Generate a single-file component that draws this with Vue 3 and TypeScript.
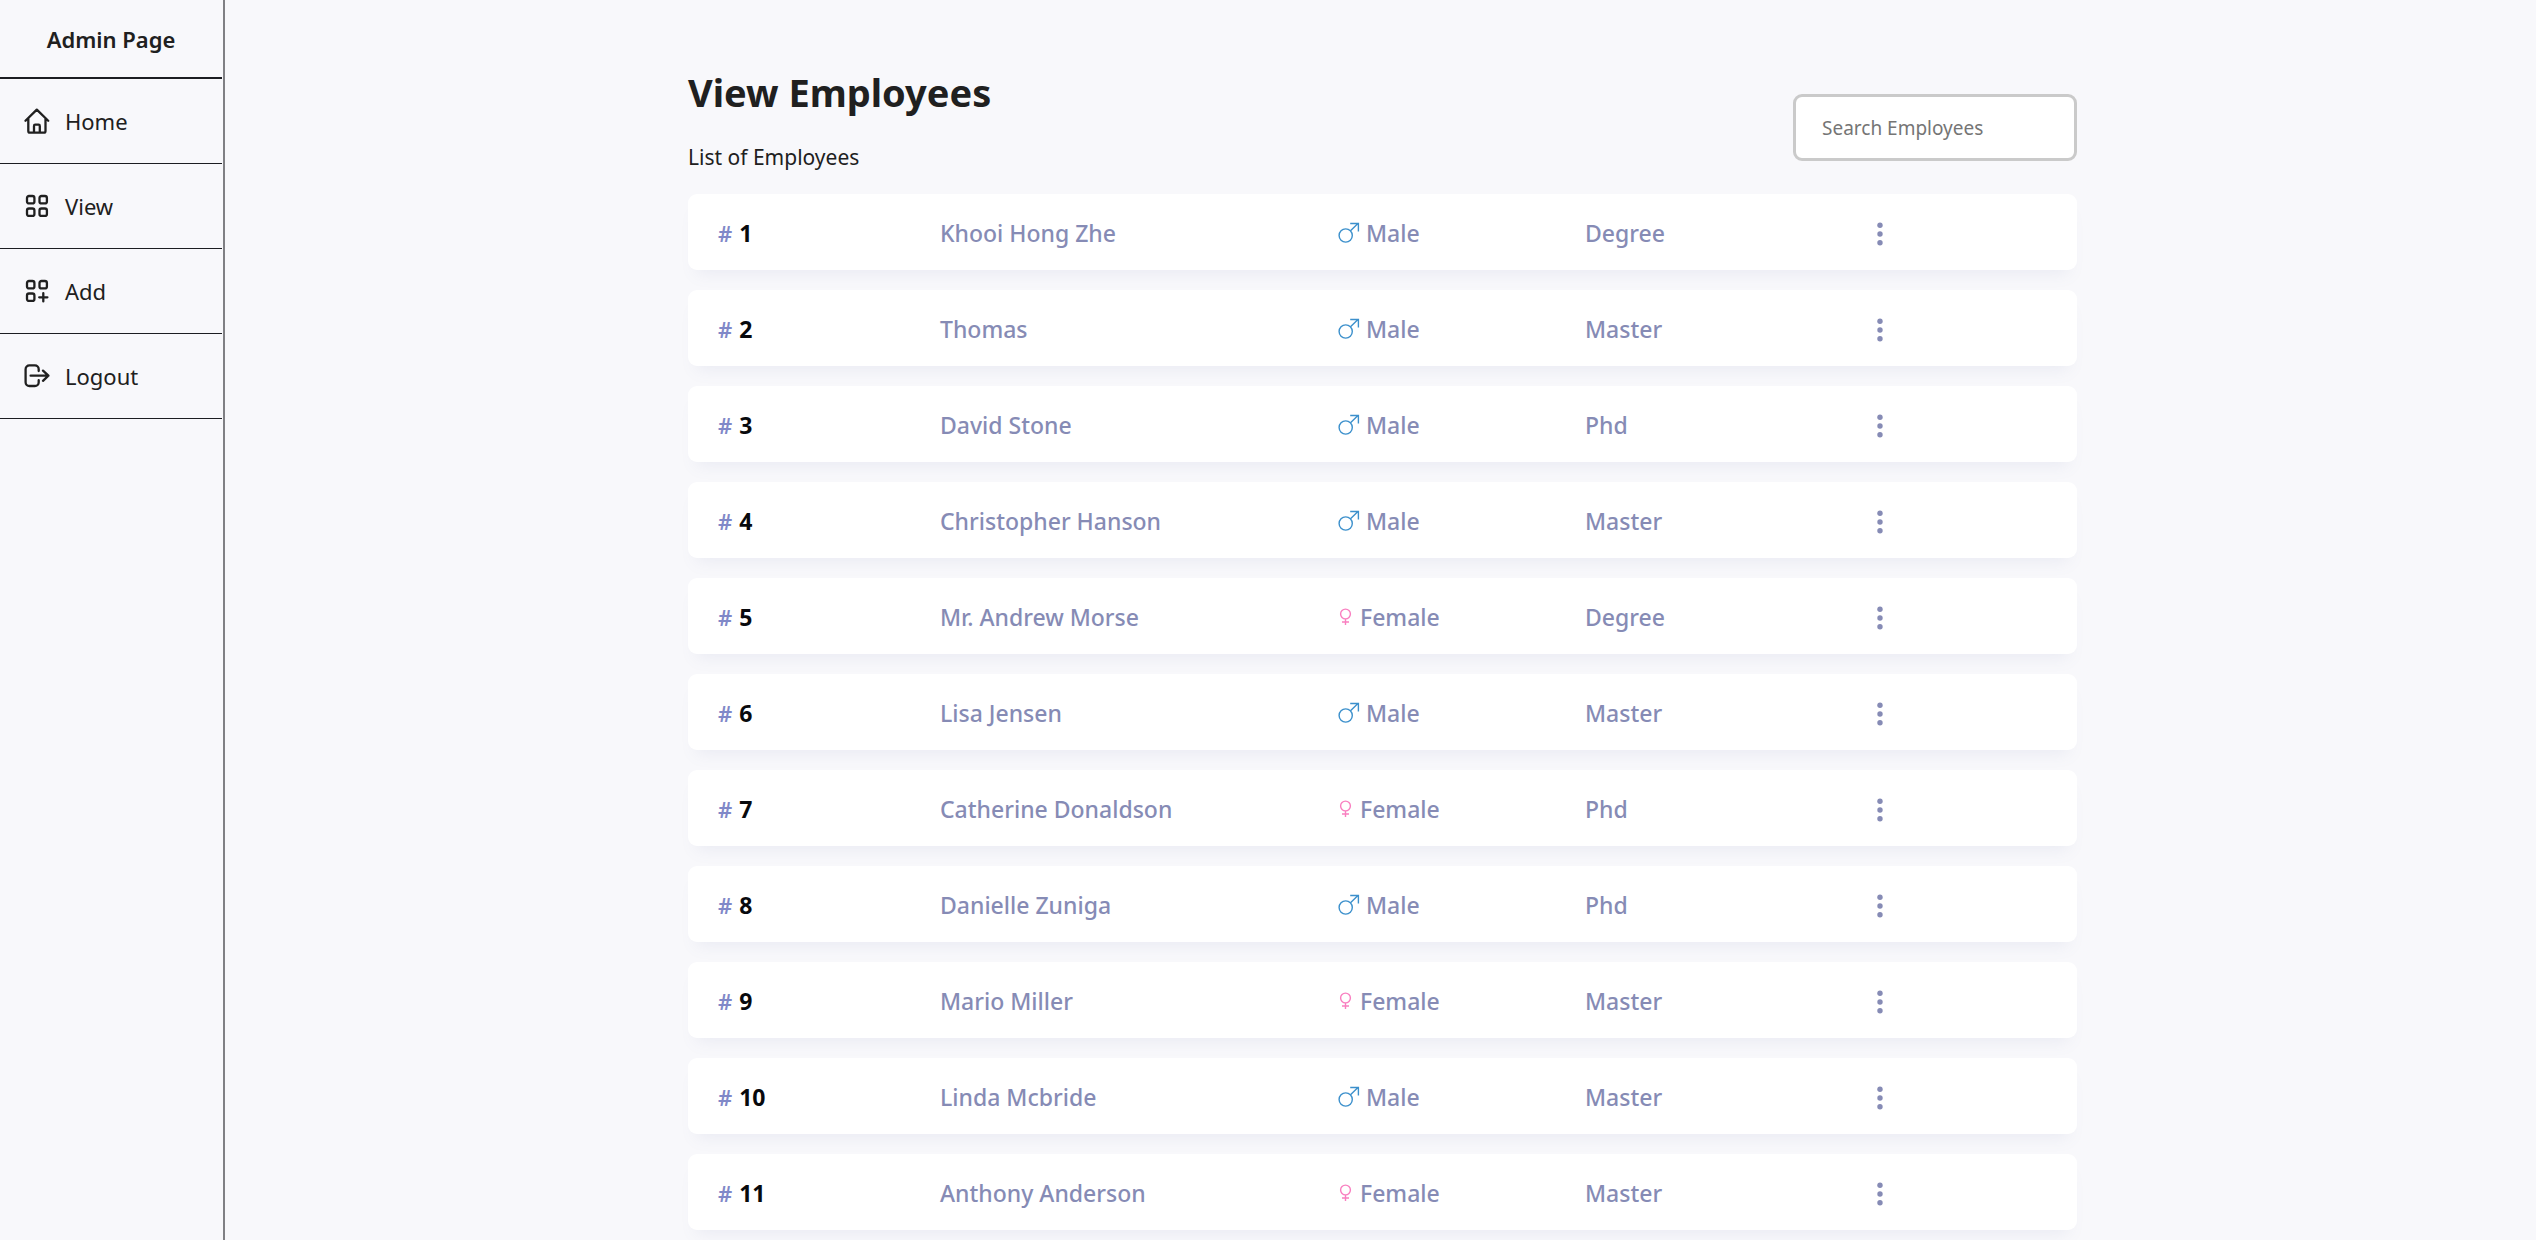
<script setup lang="ts">
import { computed, ref } from 'vue'

interface Employee {
  id: number
  name: string
  gender: 'Male' | 'Female'
  education: 'Degree' | 'Master' | 'Phd'
}

const employees: Employee[] = [
  { id: 1, name: 'Khooi Hong Zhe', gender: 'Male', education: 'Degree' },
  { id: 2, name: 'Thomas', gender: 'Male', education: 'Master' },
  { id: 3, name: 'David Stone', gender: 'Male', education: 'Phd' },
  { id: 4, name: 'Christopher Hanson', gender: 'Male', education: 'Master' },
  { id: 5, name: 'Mr. Andrew Morse', gender: 'Female', education: 'Degree' },
  { id: 6, name: 'Lisa Jensen', gender: 'Male', education: 'Master' },
  { id: 7, name: 'Catherine Donaldson', gender: 'Female', education: 'Phd' },
  { id: 8, name: 'Danielle Zuniga', gender: 'Male', education: 'Phd' },
  { id: 9, name: 'Mario Miller', gender: 'Female', education: 'Master' },
  { id: 10, name: 'Linda Mcbride', gender: 'Male', education: 'Master' },
  { id: 11, name: 'Anthony Anderson', gender: 'Female', education: 'Master' },
]

const query = ref('')
const shown = computed(() =>
  employees.filter((e) => e.name.toLowerCase().includes(query.value.trim().toLowerCase())),
)
</script>

<template>
  <div class="layout">
    <aside class="sidebar">
      <h2 class="brand">Admin Page</h2>
      <nav class="nav">
        <a class="nav-link" href="#home">
          <svg class="nav-icon" viewBox="0 0 26 26" aria-hidden="true">
            <path d="M1.5 12.8 12.8 1.6 24.2 12.8M4.3 10.5V23a1.7 1.7 0 0 0 1.7 1.7h13.8a1.7 1.7 0 0 0 1.7-1.7V10.5M10 24.5v-6.6a1.2 1.2 0 0 1 1.2-1.2h3.4a1.2 1.2 0 0 1 1.2 1.2v6.6" />
          </svg>
          Home
        </a>
        <a class="nav-link" href="#view">
          <svg class="nav-icon" viewBox="0 0 26 26" aria-hidden="true">
            <rect x="3" y="3" width="7.4" height="7.4" rx="2" />
            <rect x="15.5" y="3" width="7.4" height="7.4" rx="2" />
            <rect x="3" y="15.5" width="7.4" height="7.4" rx="2" />
            <rect x="15.5" y="15.5" width="7.4" height="7.4" rx="2" />
          </svg>
          View
        </a>
        <a class="nav-link" href="#add">
          <svg class="nav-icon" viewBox="0 0 26 26" aria-hidden="true">
            <rect x="3" y="3" width="7.4" height="7.4" rx="2" />
            <rect x="15.5" y="3" width="7.4" height="7.4" rx="2" />
            <rect x="3" y="15.5" width="7.4" height="7.4" rx="2" />
            <path d="M19.3 15.2v8.2M15.2 19.3h8.2" />
          </svg>
          Add
        </a>
        <a class="nav-link" href="#logout">
          <svg class="nav-icon" viewBox="0 0 26 26" aria-hidden="true">
            <path d="M14.7 8V6.2a3.8 3.8 0 0 0-3.8-3.8H5.4a3.8 3.8 0 0 0-3.8 3.8v13a3.8 3.8 0 0 0 3.8 3.8h5.5a3.8 3.8 0 0 0 3.8-3.8v-2M6.6 12.7h17.8M19 7.6l5.4 5.1-5.4 5.1" />
          </svg>
          Logout
        </a>
      </nav>
    </aside>

    <main class="main">
      <div class="content">
        <header class="header">
          <div>
            <h1 class="title">View Employees</h1>
            <p class="subtitle">List of Employees</p>
          </div>
          <input
            v-model="query"
            class="search"
            type="text"
            placeholder="Search Employees"
            aria-label="Search Employees"
          />
        </header>

        <table class="table">
          <tbody class="rows">
            <tr v-for="e in shown" :key="e.id" class="row">
              <td class="cell number"><span class="hash">#</span>{{ e.id }}</td>
              <td class="cell">{{ e.name }}</td>
              <td class="cell gender">
                <svg v-if="e.gender === 'Male'" class="male" viewBox="0 0 22 22" aria-hidden="true">
                  <circle cx="7.7" cy="13.5" r="6.6" />
                  <path d="M12.5 8.7 20.2 1.3M12.2 1.5h8.2v8" />
                </svg>
                <svg v-else class="female" viewBox="0 0 16 22" aria-hidden="true">
                  <circle cx="7.5" cy="8" r="4.9" />
                  <path d="M7.5 12.9v6.2M4 16h7" />
                </svg>
                {{ e.gender }}
              </td>
              <td class="cell">{{ e.education }}</td>
              <td class="cell">
                <button class="menu" type="button" :aria-label="`Actions for ${e.name}`">
                  <svg class="dots" viewBox="0 0 6 24" aria-hidden="true">
                    <circle cx="3" cy="3.3" r="2.7" />
                    <circle cx="3" cy="12" r="2.7" />
                    <circle cx="3" cy="20.7" r="2.7" />
                  </svg>
                </button>
              </td>
            </tr>
          </tbody>
        </table>
      </div>
    </main>
  </div>
</template>

<style>
body {
  background: #f8f8fb;
}
</style>

<style scoped>
.layout {
  display: flex;
  box-sizing: border-box;
  min-height: 100vh;
  font-family: "Noto Sans", "Open Sans", sans-serif;
  color: #202020;
}

.sidebar {
  box-sizing: border-box;
  flex: 0 0 225px;
  padding-right: 1px;
  border-right: 2px solid #808084;
}

.brand {
  margin: 0;
  padding: 24px 0 23px;
  border-bottom: 2px solid #1c1d22;
  font-size: 22px;
  font-weight: 600;
  line-height: 30px;
  text-align: center;
}

.nav-link {
  display: flex;
  align-items: center;
  gap: 15px;
  padding: 27px 0 27px 24px;
  border-bottom: 1px solid #1c1d22;
  color: #202020;
  font-size: 22px;
  line-height: 30px;
  text-decoration: none;
}

.nav-icon {
  width: 26px;
  height: 26px;
  fill: none;
  stroke: #202020;
  stroke-width: 2.3;
  stroke-linecap: round;
  stroke-linejoin: round;
}

.main {
  display: grid;
  flex: 1;
  grid-template-columns: 463fr 1389fr 459fr;
  align-items: start;
}

.content {
  grid-column: 2;
  padding: 66px 0 10px;
}

.header {
  display: flex;
  justify-content: space-between;
  align-items: flex-end;
  margin-bottom: 22px;
}

.title {
  margin: 0 0 24px;
  font-size: 38px;
  font-weight: 700;
  line-height: 52px;
}

.subtitle {
  margin: 0;
  font-size: 21px;
  line-height: 30px;
}

.search {
  box-sizing: border-box;
  width: 284px;
  height: 67px;
  margin-bottom: 11px;
  padding: 0 26px;
  border: 3px solid #cacaca;
  border-radius: 9px;
  background: #fff;
  color: #202020;
  font-family: inherit;
  font-size: 19px;
}

.search::placeholder {
  color: #757575;
}

.table {
  display: block;
}

.rows {
  display: flex;
  flex-direction: column;
  gap: 20px;
}

.row {
  display: grid;
  grid-template-columns: 222fr 398fr 247fr 292fr 170fr;
  align-items: center;
  padding: 23px 30px 21px;
  border-radius: 9px;
  background: #fff;
  box-shadow: 0 12px 16px -8px rgba(120, 124, 175, 0.1);
}

.cell {
  padding: 0;
  color: #868bb5;
  font-size: 23px;
  font-weight: 500;
  line-height: 32px;
}

.number {
  color: #08090d;
  font-weight: 700;
}

.hash {
  margin-right: 7px;
  color: #8088c8;
  font-size: 22px;
  font-weight: 600;
}

.gender {
  display: flex;
  align-items: center;
  gap: 6px;
}

.male,
.female {
  height: 22px;
  fill: none;
  stroke-width: 1.4;
}

.male {
  width: 22px;
  stroke: #3c90cc;
}

.female {
  width: 16px;
  stroke: #f97fc0;
}

.menu {
  display: flex;
  padding: 2px 0 0;
  border: 0;
  background: none;
  cursor: pointer;
}

.dots {
  width: 6px;
  height: 24px;
  fill: #868bb5;
}
</style>
